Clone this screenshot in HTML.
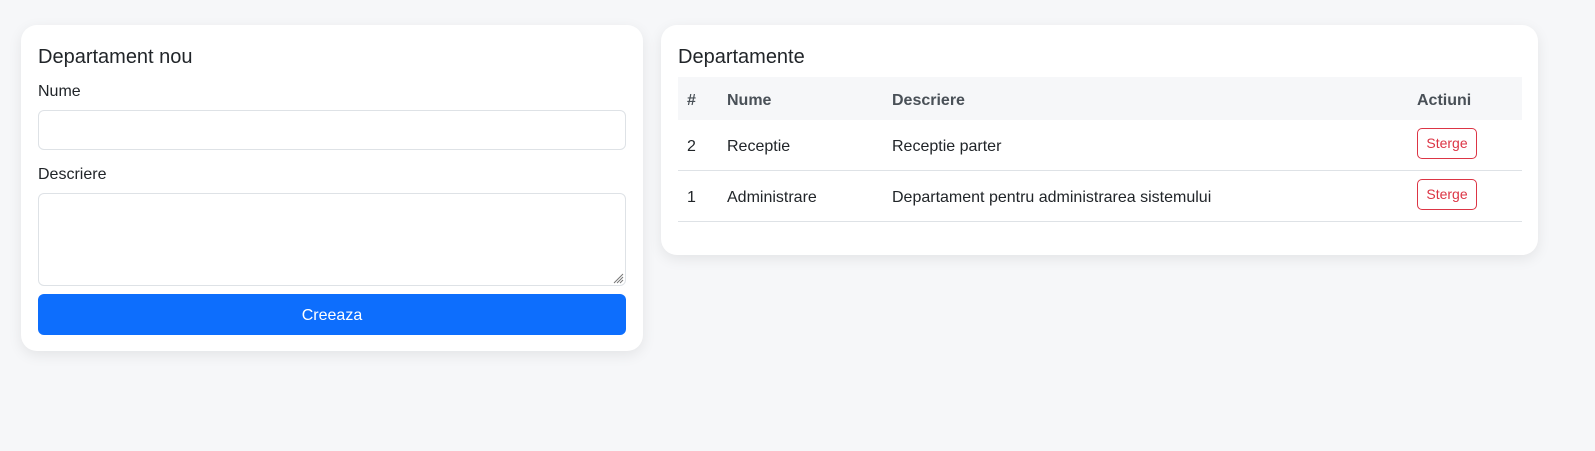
<!DOCTYPE html>
<html><head><style>
body{margin:0;width:1595px;height:451px;background:#f6f7f9;font-family:"Liberation Sans",sans-serif;color:#212529;position:relative;overflow:hidden}
.card{position:absolute;background:#fff;border-radius:16px;box-shadow:0 4px 14px rgba(0,0,0,0.08)}
.a{position:absolute;white-space:nowrap}
.in{position:absolute;border:1px solid #dee2e6;border-radius:6px;background:#fff;box-sizing:border-box}
.btn{position:absolute;left:1417px;width:60px;height:31px;border:1px solid #dc3545;border-radius:5px;color:#dc3545;font-size:14px;text-align:center;line-height:29px;box-sizing:border-box}
.th{font-weight:bold;color:#495057;font-size:16px}
.td{font-size:16px}
</style></head><body>
<div class="card" style="left:21px;top:25px;width:622px;height:326px"></div>
<div class="a" style="left:38px;top:46px;font-size:20px">Departament nou</div>
<div class="a" style="left:38px;top:83px;font-size:16px">Nume</div>
<div class="in" style="left:38px;top:110px;width:588px;height:40px"></div>
<div class="a" style="left:38px;top:166px;font-size:16px">Descriere</div>
<div class="in" style="left:38px;top:193px;width:588px;height:93px">
<svg style="position:absolute;right:1px;bottom:1px" width="12" height="12"><path d="M11 2L2 11M11 5L5 11M11 8L8 11" stroke="#777" stroke-width="1"/></svg></div>
<div class="a" style="left:38px;top:294px;width:588px;height:41px;background:#0d6efd;border-radius:6px;color:#fff;text-align:center;line-height:43px;font-size:16px">Creeaza</div>

<div class="card" style="left:661px;top:25px;width:877px;height:230px"></div>
<div class="a" style="left:678px;top:46px;font-size:20px">Departamente</div>
<div class="a" style="left:678px;top:77px;width:844px;height:43px;background:#f6f7f9"></div>
<div class="a th" style="left:687px;top:92px">#</div>
<div class="a th" style="left:727px;top:92px">Nume</div>
<div class="a th" style="left:892px;top:92px">Descriere</div>
<div class="a th" style="left:1417px;top:92px">Actiuni</div>
<div class="a td" style="left:687px;top:138px">2</div>
<div class="a td" style="left:727px;top:138px">Receptie</div>
<div class="a td" style="left:892px;top:138px">Receptie parter</div>
<div class="btn" style="top:128px">Sterge</div>
<div class="a" style="left:678px;top:170px;width:844px;height:1px;background:#dee2e6"></div>
<div class="a td" style="left:687px;top:189px">1</div>
<div class="a td" style="left:727px;top:189px">Administrare</div>
<div class="a td" style="left:892px;top:189px">Departament pentru administrarea sistemului</div>
<div class="btn" style="top:179px">Sterge</div>
<div class="a" style="left:678px;top:221px;width:844px;height:1px;background:#dee2e6"></div>
</body></html>
